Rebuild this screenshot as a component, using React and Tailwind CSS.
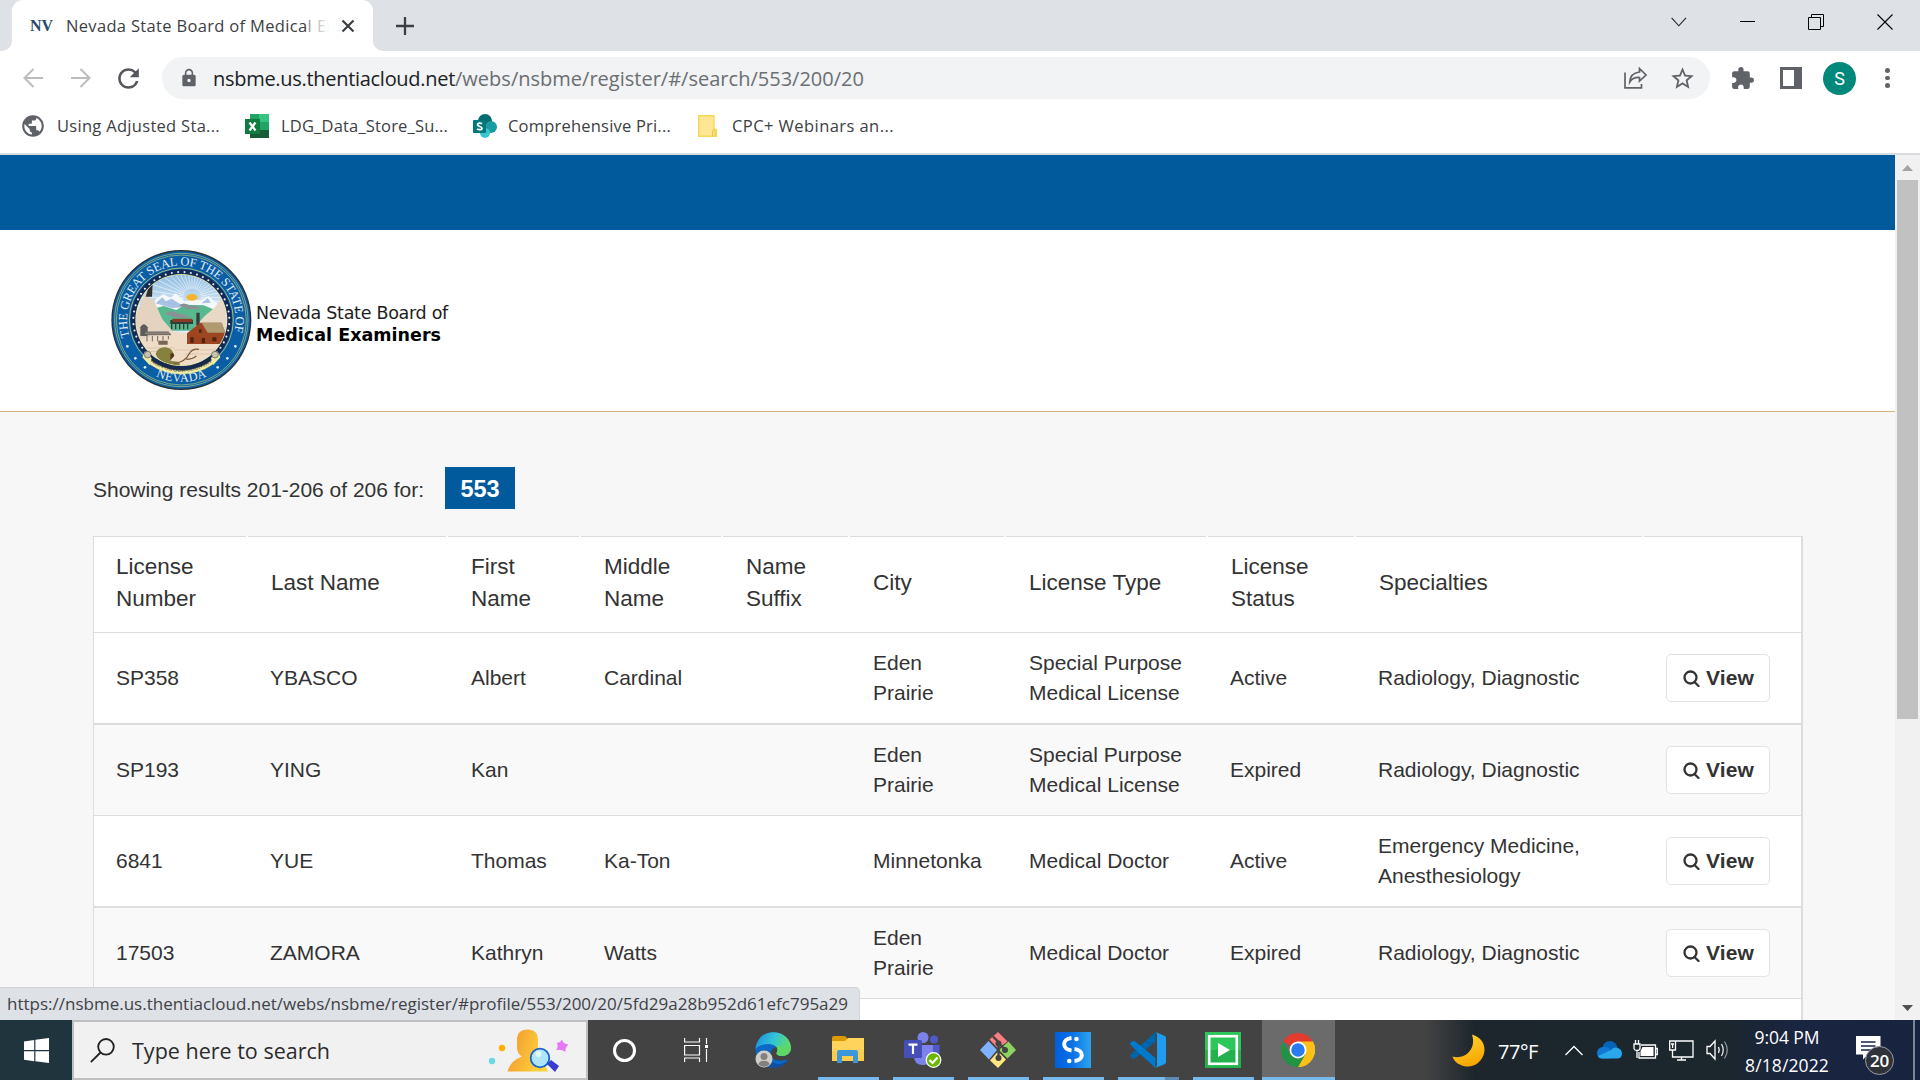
import React, { useLayoutEffect, useRef } from "react";
import { MdStarBorder, MdExtension, MdLock, MdRefresh, MdPublic } from "react-icons/md";

const UI = "font-['Open_Sans','Noto_Sans',sans-serif]";
const ARIAL = "font-['Liberation_Sans',Arial,sans-serif]";

/* Text whose letter spacing is computed so that it fills a given width. */
function Fit({ w, className = "", children }) {
  const ref = useRef(null);
  useLayoutEffect(() => {
    const el = ref.current;
    const apply = () => {
      el.style.letterSpacing = "0px";
      const natural = el.getBoundingClientRect().width;
      el.style.letterSpacing = `${(w - natural) / el.textContent.length}px`;
    };
    apply();
    if (document.fonts && document.fonts.ready) document.fonts.ready.then(apply);
  }, [w]);
  return (
    <span ref={ref} className={`inline-block shrink-0 whitespace-nowrap ${className}`}>
      {children}
    </span>
  );
}

function TabStrip() {
  return (
    <div className="flex h-[51px] shrink-0 bg-[#dee1e6]">
      <div className="flex w-[12px] items-end bg-white">
        <div className="h-full w-full rounded-br-[10px] bg-[#dee1e6]" />
      </div>
      <div className="bg-[#dee1e6]">
        <div className="flex h-[51px] w-[361px] items-center rounded-t-[11px] bg-white pl-[18px]">
          <Fit w={23} className="font-['Liberation_Serif',serif] text-[16px] font-bold text-[#2b4a68]">NV</Fit>
          <div className="relative ml-[13px] w-[264px] overflow-hidden">
            <span className={`block whitespace-nowrap text-[16.500px] leading-[24px] text-[#3c4043] ${UI}`}>
              <Fit w={246}>Nevada State Board of Medical</Fit>
              <span className="ml-[5px]">Ex</span>
            </span>
            <div className="absolute inset-y-0 right-0 w-[22px] bg-gradient-to-r from-white/40 to-white" />
          </div>
          <svg className="ml-[11px]" width="14" height="14" viewBox="0 0 14 14" stroke="#3c4043" strokeWidth="2.2">
            <path d="M1.5 1.5 12.5 12.5M12.5 1.5 1.5 12.5" />
          </svg>
        </div>
      </div>
      <div className="w-[12px] bg-white">
        <div className="h-full w-full rounded-bl-[10px] bg-[#dee1e6]" />
      </div>
      <div className="flex flex-1 items-center pl-[11px]">
        <svg width="18" height="18" viewBox="0 0 18 18" stroke="#3c4043" strokeWidth="2.3">
          <path d="M9 0V18M0 9H18" />
        </svg>
      </div>
      <div className="flex h-[43px] w-[262px] items-center gap-[53px] pl-[13px]" >
        <svg width="16" height="10" viewBox="0 0 16 10" fill="none" stroke="#222" strokeWidth="1.1">
          <path d="M.6.8 7.8 8.8 15 .8" />
        </svg>
        <svg width="15" height="15" viewBox="0 0 15 15" stroke="#000"><path d="M0 7.5H15" /></svg>
        <svg width="16" height="16" viewBox="0 0 16 16" fill="none" stroke="#000">
          <path d="M.5 3.5H12.5V15.5H.5ZM3.5 3.5V.5H15.5V12.5H12.5" />
        </svg>
        <svg width="16" height="16" viewBox="0 0 16 16" stroke="#000" strokeWidth="1.1"><path d="M.5.5 15.5 15.5M15.5.5.5 15.5" /></svg>
      </div>
    </div>
  );
}

function Toolbar() {
  return (
    <div className="flex h-[54px] shrink-0 items-center bg-white pl-[23px]">
      <svg width="20" height="20" viewBox="0 0 20 20" fill="none" stroke="#babcbe" strokeWidth="2">
        <path d="M20 10H1.8M10.5 1 1.5 10 10.5 19" />
      </svg>
      <svg className="ml-[28px]" width="20" height="20" viewBox="0 0 20 20" fill="none" stroke="#babcbe" strokeWidth="2">
        <path d="M0 10H18.2M9.500 1 18.500 10 9.500 19" />
      </svg>
      <MdRefresh className="ml-[22px]" size={31} color="#54575b" />
      <div className="ml-[18px] flex h-[42px] w-[1548px] items-center rounded-full bg-[#f1f3f4] pl-[17px]">
        <MdLock size={20} color="#5f6368" />
        <div className={`ml-[14px] flex flex-1 pt-px text-[20px] leading-[28px] ${UI}`}>
          <Fit w={242} className="text-[#202124]">nsbme.us.thentiacloud.net</Fit>
          <Fit w={409} className="text-[#6b6e72]">/webs/nsbme/register/#/search/553/200/20</Fit>
        </div>
        <svg width="23" height="22" viewBox="0 0 23 22" fill="none" stroke="#5f6368" strokeWidth="1.7">
          <path d="M1 5.500V20.800H17.500V17M15.500 1.500 22 8 15.500 14V10.500C11 10.200 8 11.500 5.800 15 6 10 9 5.800 15.500 5Z" />
        </svg>
        <MdStarBorder className="mr-[14px] ml-[22px]" size={27} color="#5f6368" />
      </div>
      <MdExtension className="ml-[20px]" size={25} color="#5f6368" />
      <svg className="ml-[25px]" width="22" height="22" viewBox="0 0 22 22">
        <path d="M0 0H22V22H0ZM3 3V19H14V3Z" fill="#5f6368" fillRule="evenodd" />
      </svg>
      <div className="ml-[21px] flex size-[33px] items-center justify-center rounded-full bg-[#00897b] font-[Roboto,sans-serif] text-[18px] text-white">S</div>
      <div className="ml-[29px] flex flex-col gap-[3px]">
        <div className="size-[4.500px] rounded-full bg-[#5f6368]" />
        <div className="size-[4.500px] rounded-full bg-[#5f6368]" />
        <div className="size-[4.500px] rounded-full bg-[#5f6368]" />
      </div>
    </div>
  );
}

function Bookmarks() {
  return (
    <div className={`flex h-[50px] shrink-0 items-center border-b-2 border-[#dadce0] bg-white pb-[6px] pl-[20px] text-[16.500px] leading-[24px] text-[#3c4043] ${UI}`}>
      <MdPublic size={26} color="#5f6368" />
      <Fit w={163} className="ml-[11px]">Using Adjusted Sta...</Fit>
      <svg className="ml-[25px]" width="24" height="24" viewBox="0 0 24 24">
        <path d="M5 0H15V8H5Z" fill="#21a366" /><path d="M14 0H24V8H14Z" fill="#33c481" />
        <path d="M5 8H15V16H5Z" fill="#107c41" /><path d="M14 8H24V16H14Z" fill="#21a366" />
        <path d="M5 16H24V24H5Z" fill="#185c37" />
        <rect y="5" width="15" height="15" fill="#107c41" />
        <path d="M4.500 8.500 10.500 16.500M10.500 8.500 4.500 16.500" stroke="#fff" strokeWidth="2.200" />
      </svg>
      <Fit w={167} className="ml-[12px]">LDG_Data_Store_Su...</Fit>
      <svg className="ml-[25px]" width="24" height="24" viewBox="0 0 24 24">
        <circle cx="12" cy="7" r="7" fill="#036c70" />
        <circle cx="18" cy="13" r="6" fill="#1a9ba1" />
        <circle cx="12" cy="19" r="5" fill="#37c6d0" />
        <rect y="6" width="13" height="13" rx="1" fill="#03787c" />
        <path d="M9 9.800C7.500 8.700 4.500 8.900 4.500 10.800S9 12.200 9 14.200 5.500 16 4 14.900" fill="none" stroke="#fff" strokeWidth="1.700" />
      </svg>
      <Fit w={163} className="ml-[11px]">Comprehensive Pri...</Fit>
      <svg className="ml-[27px]" width="19" height="22" viewBox="0 0 19 22">
        <path d="M.7.7H16V14.500H18.300V21.300H.7Z" fill="#ffe694" stroke="#f8d755" strokeWidth="1.400" />
        <path d="M14.500 21V15.500Q16 14 17 15.500V21" fill="none" stroke="#e9c53c" />
      </svg>
      <Fit w={162} className="ml-[15px]">CPC+ Webinars an...</Fit>
    </div>
  );
}

const STARS = Array.from({ length: 36 }, (_, i) => {
  const a = ((i * 7.6 - 133) * Math.PI) / 180;
  return [229 + 144 * Math.sin(a), 228 - 144 * Math.cos(a)];
});
const RAYS = Array.from({ length: 40 }, (_, i) => {
  const a = (i * 9 * Math.PI) / 180;
  return `M${261 + 26 * Math.cos(a)} ${160 + 26 * Math.sin(a)}L${261 + 190 * Math.cos(a)} ${160 + 190 * Math.sin(a)}`;
}).join("");

function Seal() {
  return (
    <svg width="152" height="152" viewBox="0 0 456 456" className="shrink-0">
      <defs>
        <clipPath id="scene"><circle cx="229" cy="228" r="136" /></clipPath>
        <path id="arcTop" d="M74 278A163 163 0 1 1 384 278" />
        <path id="arcBottom" d="M60 308A188 188 0 0 0 398 308" />
        <path id="arcMotto" d="M127 345A155 155 0 0 0 331 345" />
        <linearGradient id="sky" x1="0" y1="0" x2="0" y2="1">
          <stop offset="0" stopColor="#8fbde2" /><stop offset=".4" stopColor="#dcebf7" />
        </linearGradient>
      </defs>
      <circle cx="229" cy="228" r="210" fill="#2b3038" />
      <circle cx="229" cy="228" r="206" fill="#0a5ea5" />
      <circle cx="229" cy="228" r="200" fill="none" stroke="#b9cf7c" strokeWidth="2" />
      <circle cx="229" cy="228" r="195" fill="none" stroke="#b9cf7c" strokeWidth="2" />
      <circle cx="229" cy="228" r="156" fill="none" stroke="#b9cf7c" strokeWidth="2.500" />
      <circle cx="229" cy="228" r="152" fill="#132a57" />
      {STARS.map(([x, y], i) => <circle key={i} cx={x} cy={y} r="3.200" fill="#e6edf6" />)}
      <circle cx="229" cy="228" r="138" fill="#efe98a" />
      <g clipPath="url(#scene)">
        <rect x="90" y="90" width="280" height="280" fill="url(#sky)" />
        <path d={RAYS} stroke="#fff" strokeWidth="2.200" opacity=".75" />
        <path d="M140 200 152 165 176 150 196 162 212 148 238 172 262 168 290 168 310 156 332 174 360 190V230H140Z" fill="#f4f8fd" />
        <path d="M152 178 172 160 182 172 200 164 222 178 238 190 200 192ZM290 178 308 162 318 176Z" fill="#a9c2e4" />
        <ellipse cx="261" cy="160" rx="17" ry="10" fill="#f5b52c" />
        <path d="M140 196 176 186 214 198 240 182 296 184 330 198 340 260H140Z" fill="#58b88f" />
        <path d="M182 208Q200 196 215 208 240 212 258 218L236 222Q200 222 182 208ZM222 184Q238 172 256 186 280 182 285 194L248 196Z" fill="#8c9096" />
        <path d="M92 215 120 150 148 172 172 226 200 258 210 290H90Z" fill="#e3d3c0" />
        <path d="M122 158 130 132 143 118 141 158Z" fill="#30302f" />
        <path d="M268 250 300 215 330 190 352 160 380 230V300H268Z" fill="#e8d9c7" />
        <path d="M90 290 200 262 250 268 370 292V370H90Z" fill="#efdcc6" />
        <path d="M198 230H262V238H198ZM200 238V256M212 238V256M224 238V256M236 238V256M248 238V256" stroke="#2c4038" strokeWidth="4" fill="#2c4038" />
        <path d="M202 224H262V234H202Z" fill="#8b3a26" />
        <path d="M274 206H284V270H274Z" fill="#3d3a3e" />
        <path d="M246 268 286 236H350L362 272V300H246Z" fill="#9d4420" />
        <path d="M290 236H350L362 266H308Z" fill="#b09a72" />
        <path d="M256 280H266V296H256ZM290 282H300V298H290ZM322 280H334V292H322ZM282 256H290V266H282Z" fill="#4f2414" />
        <path d="M106 250Q116 232 128 250V276H106Z" fill="#5d5a5e" />
        <path d="M120 264H190L198 272H120ZM126 276V292M142 276V292M158 276V292M174 276V290M190 276V286" stroke="#6c6663" strokeWidth="3" fill="#8b847e" />
        <path d="M160 290H188V302H160Z" fill="#7a6659" />
        <path d="M102 312H210M120 322H170M210 318H350M240 330H345" stroke="#d8c2a8" strokeWidth="2.500" />
        <path d="M152 330Q158 308 182 310 206 314 206 336L196 350 222 354 226 366H200Q156 350 152 330Z" fill="#86813f" />
        <path d="M196 330Q206 322 208 336L196 348Z" fill="#57371f" />
        <path d="M206 358Q240 356 252 330 262 312 282 316M244 346Q262 346 274 336" fill="none" stroke="#7d5b3c" strokeWidth="4" />
      </g>
      <path d="M125 338A150 150 0 0 0 333 338L322 362A164 164 0 0 1 136 362Z" fill="#f2eba0" stroke="#b5b06a" strokeWidth="1" />
      <path d="M120 322 140 342 134 364 112 340ZM338 322 318 342 324 364 346 340Z" fill="#f2eba0" />
      <circle cx="128" cy="332" r="10" fill="#c9c4b0" stroke="#55534a" strokeWidth="2" />
      <circle cx="330" cy="332" r="10" fill="#c9c4b0" stroke="#55534a" strokeWidth="2" />
      {[[67, 307], [91, 343], [120, 370], [338, 370], [367, 343], [391, 307]].map(([x, y]) => (
        <circle key={x} cx={x} cy={y} r="4" fill="#dfe9f4" />
      ))}
      <g className="font-['Liberation_Serif',serif]" fill="#e3edf7">
        <text fontSize="37"><textPath href="#arcTop" textLength="600">THE GREAT SEAL OF THE STATE OF</textPath></text>
        <text fontSize="37" textAnchor="middle"><textPath href="#arcBottom" startOffset="50%" textLength="158">NEVADA</textPath></text>
      </g>
      <text fontSize="18" fill="#2c2c22" textAnchor="middle" className="font-['Liberation_Serif',serif]">
        <textPath href="#arcMotto" startOffset="50%" textLength="200">ALL FOR OUR COUNTRY</textPath>
      </text>
    </svg>
  );
}

function Header() {
  return (
    <>
      <div className="h-[75px] bg-[#005a9c]" />
      <div className="flex h-[182px] border-b border-[#d3b57c] bg-white pt-[14px] pl-[105px]">
        <Seal />
        <div className="-ml-px flex flex-col pt-[58px] font-['DejaVu_Sans',Verdana,sans-serif] text-[17.500px] leading-[22px] text-black">
          <Fit w={192} className="self-start text-[#1c1c1c]">Nevada State Board of</Fit>
          <Fit w={185} className="self-start font-bold">Medical Examiners</Fit>
        </div>
      </div>
    </>
  );
}

const GRID = "grid grid-cols-[154px_200px_133px_142px_127px_156px_202px_148px_288px_1fr]";
const HEAD = [["License", "Number"], ["Last Name"], ["First", "Name"], ["Middle", "Name"], ["Name", "Suffix"], ["City"], ["License Type"], ["License", "Status"], ["Specialties"], []];
const ROWS = [
  ["SP358", "YBASCO", "Albert", "Cardinal", "", "Eden|Prairie", "Special Purpose|Medical License", "Active", "Radiology, Diagnostic"],
  ["SP193", "YING", "Kan", "", "", "Eden|Prairie", "Special Purpose|Medical License", "Expired", "Radiology, Diagnostic"],
  ["6841", "YUE", "Thomas", "Ka-Ton", "", "Minnetonka", "Medical Doctor", "Active", "Emergency Medicine,|Anesthesiology"],
  ["17503", "ZAMORA", "Kathryn", "Watts", "", "Eden|Prairie", "Medical Doctor", "Expired", "Radiology, Diagnostic"],
];

function ViewButton() {
  return (
    <button className="flex h-[48px] w-[104px] items-center rounded-[5px] border border-[#e3e3e3] bg-white pl-[16px] text-[21px] font-bold text-[#333]">
      <svg width="17" height="18" viewBox="0 0 17 18" fill="none" stroke="#333" strokeWidth="2.300">
        <circle cx="7.500" cy="8.500" r="6" /><path d="M11.500 13 15.500 17" strokeLinecap="round" />
      </svg>
      <Fit w={48} className="ml-[6px]">View</Fit>
    </button>
  );
}

function Results() {
  return (
    <div className={`flex min-h-0 flex-1 flex-col bg-[#f7f7f7] pt-[55px] pr-[92px] pl-[93px] text-[21px] text-[#333] ${ARIAL}`}>
      <div className="flex h-[42px] shrink-0 items-center">
        <Fit w={331} className="pt-[4px]">Showing results 201-206 of 206 for:</Fit>
        <div className="ml-[21px] flex h-[42px] w-[70px] items-center justify-center bg-[#005a9c] pt-[3px] text-[23.500px] font-bold text-white">553</div>
      </div>
      <div className="mt-[27px] flex min-h-0 flex-1 flex-col overflow-hidden border-r-2 border-l border-[#ddd] bg-white">
        <div className={`h-[97px] shrink-0 border-b border-[#ddd] text-[22.500px] leading-[32px] ${GRID}`}>
          {HEAD.map((lines, i) => (
            <div key={i} className={`flex flex-col justify-center border-t border-[#ddd] pb-[3px] ${i ? "pl-[23px]" : "pl-[22px]"} ${i < 9 ? "mr-[2px]" : ""}`}>
              {lines.map((l) => <span key={l} className="whitespace-nowrap">{l}</span>)}
            </div>
          ))}
        </div>
        {ROWS.map((row, r) => (
          <div key={r} className={`shrink-0 border-[#ddd] leading-[30px] ${GRID} ${r % 2 ? "h-[91px] border-b bg-[#f9f9f9]" : "h-[92px] border-b-2 bg-white"}`}>
            {row.map((cell, c) => (
              <div key={c} className={`flex flex-col justify-center ${c > 1 && c < 7 ? "pl-[23px]" : "pl-[22px]"}`}>
                {cell.split("|").map((l) => <span key={l} className="whitespace-nowrap">{l}</span>)}
              </div>
            ))}
            <div className="flex items-center pl-[22px]"><ViewButton /></div>
          </div>
        ))}
      </div>
    </div>
  );
}

function Scrollbar() {
  return (
    <div className="flex w-[25px] flex-col items-center bg-[#f1f1f1]">
      <div className="flex h-[25px] items-center pt-[1px]">
        <svg width="11" height="6" viewBox="0 0 11 6"><path d="M0 6 5.500 0 11 6Z" fill="#a3a3a3" /></svg>
      </div>
      <div className="h-[539px] w-[21px] bg-[#c1c1c1]" />
      <div className="mt-auto mb-[9px]">
        <svg width="11" height="6" viewBox="0 0 11 6"><path d="M0 0 5.500 6 11 0Z" fill="#505050" /></svg>
      </div>
    </div>
  );
}

function SearchBox() {
  return (
    <div className="flex h-[60px] w-[516px] items-center border-2 border-[#bfbfbf] bg-[#f1f1f1] pl-[16px]">
      <svg width="25" height="25" viewBox="0 0 25 25" fill="none" stroke="#222" strokeWidth="1.800">
        <circle cx="16" cy="8.800" r="7.800" /><path d="M10.500 14.500 .8 24.200" />
      </svg>
      <Fit w={198} className={`ml-[17px] pt-[2px] text-[21.500px] leading-[30px] text-[#2b2b2b] ${UI}`}>Type here to search</Fit>
      <svg className="ml-[158px]" width="82" height="46" viewBox="0 0 82 46">
        <defs>
          <linearGradient id="per" x1="0" x2="1" y1="0" y2=".3"><stop offset="0" stopColor="#f0932f" /><stop offset="1" stopColor="#ffd43a" /></linearGradient>
        </defs>
        <circle cx="14" cy="21" r="3.200" fill="#ffb000" />
        <circle cx="4" cy="34" r="3.200" fill="#6bd8e6" />
        <path d="M29 13Q29 2.500 39.500 2.500T50 13V22Q50 29 45 31 58 36 60 44.500H19.500Q22 34 34 29.500 29 27 29 20Z" fill="url(#per)" />
        <path d="M59 37 63 33 71 39 67 45Z" fill="#3b3bd0" />
        <circle cx="52" cy="31" r="9.300" fill="#aee6f7" stroke="#1762cf" strokeWidth="1.800" />
        <circle cx="50.500" cy="27" r="3" fill="#e3f8fd" />
        <path d="M74 12.500Q75 17 80.500 17.500 77 20 77.500 25 73.500 22 68 23 71 19.500 68.500 15.500 72 16.500 74 12.500Z" fill="#e678f5" />
      </svg>
    </div>
  );
}

function AppSlot({ active, indicator = true, split, children }) {
  return (
    <div className={`flex h-[60px] flex-col items-center ${active ? "ml-px w-[73px] bg-[#6b6b6b]" : "w-[75px]"}`}>
      <div className="flex h-[57px] items-center pt-[3px] pr-px">{children}</div>
      {indicator && (
        <div className={`flex h-[3px] bg-[#76b9ed] ${active ? "w-full" : "w-[61px]"}`}>
          {split && <div className="ml-auto w-[14px] bg-[#5b8bb3]" />}
        </div>
      )}
    </div>
  );
}

function EdgeIcon() {
  return (
    <svg width="36" height="36" viewBox="0 0 36 36">
      <defs>
        <linearGradient id="eg1" x1="0" x2="1" y1=".2" y2=".5"><stop offset="0" stopColor="#1c8fdc" /><stop offset=".5" stopColor="#33c4d8" /><stop offset="1" stopColor="#62dd5c" /></linearGradient>
      </defs>
      <circle cx="18" cy="18" r="17.500" fill="#0b68c4" />
      <path d="M.5 17C2 5 10 .3 18 .3 29 .3 36 8 36 15.500 36 21 32 24 27 24 23.500 24 21 22.500 21.500 21 23.500 18 22 13.500 16.500 12.500 9 11 2.500 14 .5 17Z" fill="url(#eg1)" />
      <path d="M14 19C11 25 16 33 25 32 29 31.500 32 29 34 26.500 31 33 25 36 18 36 10 34 10 23 14 19Z" fill="#0f4fa0" />
      <path d="M22 15C24 18 21 20 21.500 21.500 23 26 33 25 36 19 37 24 35 26.500 33.500 27 26 30 16 29 15.500 22 15.500 18 19 15 22 15Z" fill="#434343" />
      <path d="M36 15C36 21 32 24 27 24 23.500 24 21 22.500 21.500 21 23 19 22.500 16 21 14Z" fill="#5fd765" />
      <circle cx="9" cy="27" r="8.500" fill="#d0cecb" />
      <circle cx="9" cy="24.500" r="3.500" fill="#83807d" />
      <path d="M3.500 32.500Q4 28.800 9 28.800T14.500 32.500Q9 37 3.500 32.500Z" fill="#83807d" />
    </svg>
  );
}
function ExplorerIcon() {
  return (
    <svg width="32" height="28" viewBox="0 0 32 28">
      <path d="M0 2Q0 0 2 0H12Q14 0 15 2L16 5H0Z" fill="#dc9a00" />
      <path d="M0 5H13L16 2H32V25H0Z" fill="#ffd35c" />
      <path d="M0 15H32V25H0Z" fill="#fbc83d" opacity=".6" />
      <path d="M5 27V16Q5 14 7 14H24Q26 14 26 16V27H21V20H10V27Z" fill="#3d97dd" />
    </svg>
  );
}
function TeamsIcon() {
  return (
    <svg width="38" height="36" viewBox="0 0 38 36">
      <circle cx="19" cy="5.500" r="5.500" fill="#7b83eb" /><circle cx="30" cy="7.500" r="4" fill="#5059c9" />
      <path d="M24 13H35.500V24Q35 30 28 29Z" fill="#5059c9" />
      <path d="M10 13H29V24Q28 33 19 33T10 24Z" fill="#7b83eb" />
      <rect y="8" width="18" height="18" rx="1.500" fill="#464eb8" />
      <path d="M4.500 12.700H13.500M9 12.700V22" stroke="#fff" strokeWidth="2.200" />
      <circle cx="29.500" cy="28" r="7.300" fill="#6bb700" stroke="#fff" strokeWidth="1.300" />
      <path d="M25.500 28 28.500 31 33.500 25.500" fill="none" stroke="#fff" strokeWidth="2.200" />
    </svg>
  );
}
function GitIcon() {
  return (
    <svg width="36" height="36" viewBox="0 0 36 36">
      <path d="M18 0 27.500 9.500 18 16.500 9.500 7.500Z" fill="#fb7f80" />
      <path d="M8.500 9 17 18 9 27.500 0 18Z" fill="#80b3ff" />
      <path d="M28.500 9.500 36 18 27.500 26.500 19 18Z" fill="#8cd35f" />
      <path d="M18 19.500 26 27.500 18 36 10 28.500Z" fill="#ffe680" />
      <path d="M13 4.500 18.500 10V27M18.500 11 25.500 18" stroke="#434343" strokeWidth="2.400" fill="none" />
      <circle cx="18.500" cy="11.500" r="3" fill="#434343" /><circle cx="18.500" cy="26" r="3" fill="#434343" /><circle cx="25" cy="18" r="3" fill="#434343" />
    </svg>
  );
}
function SIcon() {
  return (
    <svg width="36" height="36" viewBox="0 0 36 36">
      <defs><linearGradient id="sg"><stop offset="0" stopColor="#0060dc" /><stop offset=".45" stopColor="#0b6fe6" /><stop offset="1" stopColor="#2ba4ee" /></linearGradient></defs>
      <rect width="36" height="36" fill="url(#sg)" />
      <path d="M16.500 6C6.500 7 7 17.500 16.500 18.500" fill="none" stroke="#fff" strokeWidth="4" />
      <path d="M19.500 17C29 18 29.500 28 19.500 29" fill="none" stroke="#fff" strokeWidth="4" />
      <circle cx="21.500" cy="7" r="2.300" fill="#fff" /><circle cx="14.300" cy="29" r="2.300" fill="#fff" />
    </svg>
  );
}
function CodeIcon() {
  return (
    <svg width="36" height="36" viewBox="0 0 36 36">
      <path d="M25.500 0V9.500L5 26.500Q3.500 27.500 2 26.500L.6 25Q-.4 23.800.6 22.500Z" fill="#0065a9" />
      <path d="M25.500 36V26L5 9.300Q3.500 8.300 2 9.300L.6 10.800Q-.4 12 .6 13.200Z" fill="#007acc" />
      <path d="M25 36Q27 35 27 33V2.500Q27 1 25.500 0L34.500 3.800Q36 4.500 36 6V30Q36 31.500 34.500 32.200Z" fill="#1f9cf0" />
    </svg>
  );
}
function PlayIcon() {
  return (
    <svg width="36" height="36" viewBox="0 0 36 36">
      <rect width="36" height="36" fill="#2cc65a" /><rect y="18" width="36" height="18" fill="#22b14c" />
      <rect x="4.200" y="4.200" width="27.600" height="27.600" fill="none" stroke="#fff" strokeWidth="2.600" />
      <path d="M13 11 25 18 13 25Z" fill="#fff" />
    </svg>
  );
}
function ChromeIcon() {
  return (
    <svg width="34" height="34" viewBox="0 0 48 48">
      <path d="M24 24 3.200 12A24 24 0 0 1 44.800 12Z" fill="#e33b2e" />
      <path d="M24 24 44.800 12A24 24 0 0 1 24 48L34.400 30Z" fill="#fbc116" />
      <path d="M24 12H44.800A24 24 0 0 1 24 48L34.400 30Z" fill="#fbc116" />
      <path d="M13.600 30 3.200 12A24 24 0 0 0 24 48L34.400 30Z" fill="#229342" />
      <circle cx="24" cy="24" r="12" fill="#fff" /><circle cx="24" cy="24" r="9.500" fill="#2a7bee" />
    </svg>
  );
}

function Tray() {
  return (
    <div className={`ml-auto flex h-[60px] w-[468px] items-center text-white ${UI}`}>
      <svg className="shrink-0" width="33" height="33" viewBox="0 0 33 33">
        <defs><linearGradient id="moon" x1="0" y1="0" x2=".4" y2="1"><stop offset="0" stopColor="#ffd83b" /><stop offset="1" stopColor="#f9a800" /></linearGradient></defs>
        <path d="M20 .5C29 3 33 10 32.500 17 31 28 22 33 15 32.500 8 32 2 28 .5 22.500 12 26 25 16 20 .5Z" fill="url(#moon)" />
      </svg>
      <Fit w={40} className="ml-[13px] pt-[4px] text-[20px] leading-[26px]">77°F</Fit>
      <svg className="ml-[27px] shrink-0" width="18" height="11" viewBox="0 0 18 11" fill="none" stroke="#fff" strokeWidth="1.300"><path d="M.5 10 9 1.500 17.500 10" /></svg>
      <svg className="ml-[14px] shrink-0" width="25" height="18" viewBox="0 0 25 18">
        <path d="M5 9Q6 0 13 0 19 0 20.500 7L12 13Z" fill="#0364b8" />
        <path d="M5 17.500Q0 17 0 12 .5 6.500 6 6 10 5 14 9L22 14 12 17.500Z" fill="#0f78d4" />
        <path d="M14 9Q17 5.500 21 7 25 8.500 25 13 24.500 17.500 20 17.500H5Q2 17.500 1 15L14 9Z" fill="#28a8ea" />
      </svg>
      <svg className="ml-[11px] shrink-0" width="25" height="20" viewBox="0 0 25 20" fill="none" stroke="#fff" strokeWidth="1.300">
        <path d="M8 5H22.500V18H6V12M22.500 8.500H24.300V14.500H22.500" /><path d="M9.500 7H20.500V16H7.500V11Z" fill="#fff" stroke="none" />
        <path d="M1 4H7V8Q7 10.500 4 10.500T1 8ZM2.500 0V4M5.500 0V4M4 10.500V18" />
      </svg>
      <svg className="ml-[11px] shrink-0" width="25" height="21" viewBox="0 0 25 21" fill="none" stroke="#fff" strokeWidth="1.300">
        <path d="M7 1H24V17H3.500V10M12.500 17V20M8 20H17" /><path d="M.7 1H6.500V10H.7ZM2 4H5M3.600 4V8" />
      </svg>
      <svg className="ml-[12px] shrink-0" width="23" height="22" viewBox="0 0 23 22" fill="none" stroke="#fff" strokeWidth="1.300">
        <path d="M1 7.500H4L9 2V20L4 14.500H1Z" /><path d="M12.500 8Q14 11 12.500 14" /><path d="M15.500 5Q19 11 15.500 17" opacity=".9" /><path d="M18.500 2.500Q24 11 18.500 19.500" opacity=".5" />
      </svg>
      <div className="ml-[13px] flex w-[90px] shrink-0 flex-col items-center pt-px text-[17.500px] leading-[28px]">
        <Fit w={65}>9:04 PM</Fit>
        <Fit w={84}>8/18/2022</Fit>
      </div>
      <div className="relative mt-[6px] ml-[24px] h-[34px] w-[40px] shrink-0">
        <svg width="25" height="24" viewBox="0 0 25 24"><path d="M0 0H24.500V18.500H12L7 23.500V18.500H0Z" fill="#fff" /><path d="M5 6H19.500M5 10H19.500M5 14H19.500" stroke="#1a2440" strokeWidth="1.300" /></svg>
        <div className="absolute top-[10px] left-[9px] flex size-[29px] items-center justify-center rounded-full border border-[#9a9da3] bg-[#2f3238] text-[17px] font-semibold">
          <Fit w={19}>20</Fit>
        </div>
      </div>
      <div className="ml-auto h-full w-[7px] shrink-0 border-l-2 border-[#7c8596]" />
    </div>
  );
}

function Taskbar() {
  return (
    <div className="flex h-[60px] shrink-0 bg-[linear-gradient(90deg,#20343d_0px,#20343d_73px,#434343_74px,#434343_1425px,#1d262d_1475px,#1b262d_1720px,#1a2542_1800px,#18233f_1920px)]">
      <div className="flex w-[72px] items-center justify-center">
        <svg width="25" height="25" viewBox="0 0 25 25" fill="#fff">
          <path d="M0 3.500 10.200 2V12H0ZM11.400 1.800 25 0V12H11.400ZM0 13.200H10.200V23.200L0 21.700ZM11.400 13.200H25V25L11.400 23.300Z" />
        </svg>
      </div>
      <SearchBox />
      <div className="flex w-[72px] items-center justify-center">
        <div className="size-[23px] rounded-full border-[3px] border-white" />
      </div>
      <div className="flex w-[76px] items-center pl-[24px]">
        <svg width="25" height="24" viewBox="0 0 25 24" fill="none" stroke="#fff" strokeWidth="1.200">
          <path d="M.6 0V4H15.500V0M.6 7.500H15.500V17H.6ZM.6 24V20H15.500V24M22.500 0V6M22.500 11V24" /><path d="M21 7H24V10H21Z" fill="#fff" stroke="none" />
        </svg>
      </div>
      <AppSlot indicator={false}><EdgeIcon /></AppSlot>
      <AppSlot><ExplorerIcon /></AppSlot>
      <AppSlot><TeamsIcon /></AppSlot>
      <AppSlot><GitIcon /></AppSlot>
      <AppSlot><SIcon /></AppSlot>
      <AppSlot split><CodeIcon /></AppSlot>
      <AppSlot><PlayIcon /></AppSlot>
      <AppSlot active><ChromeIcon /></AppSlot>
      <Tray />
    </div>
  );
}

export default function App() {
  return (
    <div className="flex h-[1080px] w-[1920px] flex-col overflow-hidden bg-white">
      <TabStrip />
      <Toolbar />
      <Bookmarks />
      <div className="relative flex h-[865px] min-h-0 flex-1">
        <div className="flex min-w-0 flex-1 flex-col overflow-hidden">
          <Header />
          <Results />
        </div>
        <Scrollbar />
        <div className={`absolute bottom-0 left-0 flex h-[33px] w-[860px] items-center rounded-tr-[5px] border-t border-r border-[#d0d3d8] bg-[#dee1e6] pl-[7px] text-[17px] text-[#3f4246] ${UI}`}>
          <Fit w={841}>https://nsbme.us.thentiacloud.net/webs/nsbme/register/#profile/553/200/20/5fd29a28b952d61efc795a29</Fit>
        </div>
      </div>
      <Taskbar />
    </div>
  );
}
